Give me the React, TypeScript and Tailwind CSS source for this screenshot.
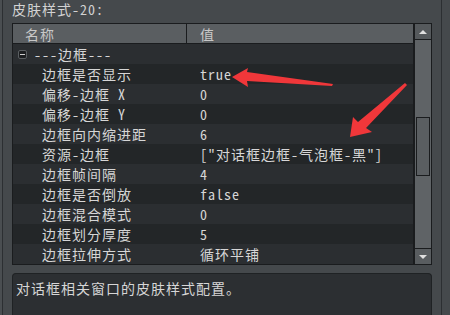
const FONT = '"Noto Sans Mono CJK SC", "DejaVu Sans Mono", "Noto Sans CJK SC", monospace';

const ROWS: { name: string; value: string }[] = [
  { name: "边框是否显示", value: "true" },
  { name: "偏移-边框 X", value: "0" },
  { name: "偏移-边框 Y", value: "0" },
  { name: "边框向内缩进距", value: "6" },
  { name: "资源-边框", value: '["对话框边框-气泡框-黑"]' },
  { name: "边框帧间隔", value: "4" },
  { name: "边框是否倒放", value: "false" },
  { name: "边框混合模式", value: "0" },
  { name: "边框划分厚度", value: "5" },
  { name: "边框拉伸方式", value: "循环平铺" },
];

function Arrows() {
  return (
    <svg className="absolute inset-0 pointer-events-none" width={450} height={315} aria-hidden>
      <polygon
        fill="#f0373a"
        points="232,77 248,68 247,72 333,84 332,86 247,81 248,87"
      />
      <polygon
        fill="#f0373a"
        points="350,137 353,117 358,122 405,83 407,85 366,128 372,132"
      />
    </svg>
  );
}

export default function App() {
  return (
    <div
      className="relative w-[450px] h-[315px] overflow-hidden bg-[#45494c] flex text-[14px] tracking-[1px] text-[#d6d6d6]"
      style={{ fontFamily: FONT }}
    >
      <div className="w-[2px] bg-[#4a4e51]" />
      <div className="w-[1px] bg-[#2c2f32]" />
      <div className="flex-1 flex flex-col pl-[9px] pr-[9px]">
        <div className="h-[23px] leading-[23px] text-[#d2d2d2] -mt-[2px] mb-[2px]">皮肤样式-20:</div>
        <div className="flex border border-[#1a1c1e] bg-[#232628] h-[242px]">
          <div className="flex-1 flex flex-col">
            {/* header */}
            <div className="flex h-[20px] leading-[20px] bg-[#5a5e61] border-b border-[#1a1c1e] text-[#c8c8c8]">
              <div className="w-[174px] pl-[12px] border-r border-[#1a1c1e]">名称</div>
              <div className="flex-1 pl-[13px]">值</div>
            </div>
            {/* group row */}
            <div className="flex items-center h-[20px] bg-[#2b2e31]">
              <div className="ml-[5px] w-[9px] h-[9px] rounded-[2px] bg-[#1c1e20] border border-[#5a5e61] flex items-center justify-center">
                <div className="w-[5px] h-[1px] bg-[#cfcfcf]" />
              </div>
              <span className="ml-[7px]">---边框---</span>
            </div>
            {ROWS.map((r, i) => (
              <div
                key={i}
                className={`flex h-[20px] leading-[20px] ${i % 2 === 0 ? "bg-[#232628]" : "bg-[#2b2e31]"}`}
              >
                <div className="w-[175px] pl-[29px] whitespace-nowrap">{r.name}</div>
                <div className="flex-1 pl-[12px] whitespace-nowrap">{r.value}</div>
              </div>
            ))}
          </div>
          {/* scrollbar */}
          <div className="w-[18px] flex flex-col bg-[#5f6366] border-l-2 border-[#1a1c1e]">
            <div className="h-[16px] bg-[#55595c] border-b border-[#1a1c1e] flex items-center justify-center">
              <div className="w-0 h-0 border-l-[4px] border-r-[4px] border-b-[4px] border-l-transparent border-r-transparent border-b-[#e0e0e0]" />
            </div>
            <div className="flex-1 relative">
              <div className="absolute left-[1px] right-[1px] top-[77px] h-[59px] border border-[#1a1c1e] bg-[#5a5e61]" />
            </div>
            <div className="h-[16px] bg-[#595d60] border-t border-[#1a1c1e] flex items-center justify-center">
              <div className="w-0 h-0 border-l-[4px] border-r-[4px] border-t-[4px] border-l-transparent border-r-transparent border-t-[#e0e0e0]" />
            </div>
          </div>
        </div>
        <div className="mt-[8px] flex-1 rounded-t-[4px] border border-b-0 border-[#1f2224] bg-[#2c2f32] pl-[3px] pt-[4px] leading-[20px]">
          对话框相关窗口的皮肤样式配置。
        </div>
      </div>
      <div className="w-[1px] bg-[#2c2f32]" />
      <div className="w-[8px] bg-[#45494c]" />
      <Arrows />
    </div>
  );
}
